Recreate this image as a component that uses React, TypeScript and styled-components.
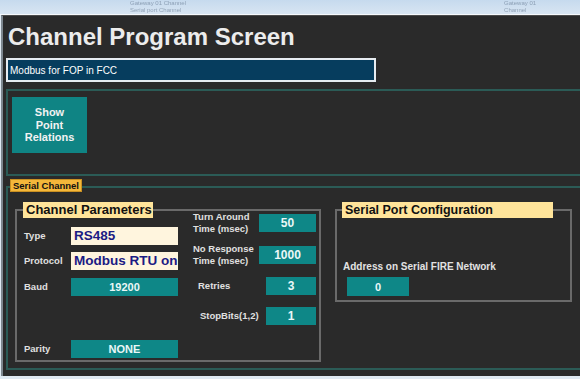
import React from "react";
import styled, { createGlobalStyle } from "styled-components";

const Global = createGlobalStyle`
  html, body { margin: 0; padding: 0; }
  body { background: #dde8f2; font-family: "Liberation Sans", Arial, sans-serif; }
  #root { width: 580px; height: 379px; overflow: hidden; }
`;

const Page = styled.div`
  width: 580px;
  height: 379px;
  display: flex;
  flex-direction: column;
  background: #dfe9f2;
  overflow: hidden;
`;

const Chrome = styled.div`
  height: 14px;
  flex: none;
  background: linear-gradient(#c6daee, #d8e5f2);
  border-bottom: 1px solid #f6f9fc;
  display: flex;
  padding-left: 130px;
  gap: 318px;
  overflow: hidden;
`;

const ChromeText = styled.div`
  font-size: 6px;
  line-height: 7px;
  color: rgba(80, 100, 125, 0.5);
  filter: blur(0.7px);
  white-space: nowrap;
`;

const Main = styled.main`
  height: 361px;
  box-sizing: border-box;
  margin-left: 1px;
  background: #2a2a2a;
  border-top: 1px solid #4c4c4c;
  border-left: 2px solid #7d878f;
  padding: 7px 0 0 0;
  display: flex;
  flex-direction: column;
`;

const Title = styled.h1`
  margin: 0 0 0 5px;
  font-size: 24px;
  line-height: 28px;
  font-weight: bold;
  color: #ececec;
`;

const NameInput = styled.input`
  margin: 7px 0 0 3px;
  width: 370px;
  height: 24px;
  box-sizing: border-box;
  border: 2px solid #e6ecf1;
  background: #063d5e;
  color: #ffffff;
  font-family: "Liberation Sans", Arial, sans-serif;
  font-size: 10px;
  padding: 0 2px;
  outline: none;
`;

const Section = styled.section<{ $mt: number; $h: number; $pad: string }>`
  position: relative;
  margin: ${(p) => p.$mt}px 0 0 3px;
  height: ${(p) => p.$h}px;
  box-sizing: border-box;
  border: 2px solid #2b5b56;
  border-right: none;
  padding: ${(p) => p.$pad};
`;

const SectionTag = styled.div`
  position: absolute;
  top: -9px;
  left: 2px;
  height: 13px;
  line-height: 12px;
  padding: 0 2px;
  background: #f4b73a;
  border: 1px solid #c99022;
  box-sizing: border-box;
  width: 72px;
  font-size: 9.5px;
  font-weight: bold;
  color: #111;
  white-space: nowrap;
`;

const ActionButton = styled.button`
  width: 75px;
  height: 56px;
  border: none;
  background: #0f8484;
  color: #f2f2f2;
  font-family: "Liberation Sans", Arial, sans-serif;
  font-size: 11px;
  font-weight: bold;
  line-height: 12.5px;
  text-align: center;
  padding: 0;
`;

const FrameRow = styled.div`
  display: flex;
  align-items: flex-start;
  gap: 14px;
`;

const Frame = styled.div<{ $w: number; $h: number }>`
  position: relative;
  width: ${(p) => p.$w}px;
  height: ${(p) => p.$h}px;
  box-sizing: border-box;
  border: 2px solid #6a6a6a;
  display: flex;
  align-items: flex-start;
`;

const FrameTitle = styled.div<{ $w: number; $left: number; $size: number }>`
  position: absolute;
  top: -9px;
  left: ${(p) => p.$left}px;
  width: ${(p) => p.$w}px;
  height: 16px;
  line-height: 16px;
  padding-left: 3px;
  box-sizing: border-box;
  background: #ffe49a;
  color: #111;
  font-size: ${(p) => p.$size}px;
  font-weight: bold;
  white-space: nowrap;
`;

const LeftCol = styled.div`
  display: flex;
  flex-direction: column;
  margin: 16px 0 0 7px;
`;

const RightCol = styled.div`
  display: flex;
  flex-direction: column;
  margin: 0 0 0 15px;
`;

const LRow = styled.div<{ $mt: number }>`
  display: grid;
  grid-template-columns: 47px 107px;
  align-items: center;
  margin-top: ${(p) => p.$mt}px;
`;

const RRow = styled.div<{ $mt: number }>`
  display: grid;
  grid-template-columns: 66px 57px;
  align-items: center;
  margin-top: ${(p) => p.$mt}px;
`;

const Label = styled.div<{ $indent?: number }>`
  font-size: 9.5px;
  line-height: 12px;
  font-weight: bold;
  color: #e0e0e0;
  padding-left: ${(p) => p.$indent ?? 0}px;
  white-space: nowrap;
`;

const AddrLabel = styled.div`
  font-size: 10px;
  line-height: 12px;
  font-weight: bold;
  color: #e2e2e2;
  white-space: nowrap;
`;

const TealField = styled.div<{ $w: number; $h?: number; $size: number }>`
  justify-self: end;
  width: ${(p) => p.$w}px;
  height: ${(p) => p.$h ?? 18}px;
  background: #0e8787;
  color: #eaf7f7;
  font-size: ${(p) => p.$size}px;
  font-weight: bold;
  display: flex;
  align-items: center;
  justify-content: center;
`;

const CreamField = styled.div`
  width: 107px;
  height: 18px;
  box-sizing: border-box;
  background: #fff5de;
  color: #1b1b84;
  font-size: 13.5px;
  font-weight: bold;
  line-height: 18px;
  padding-left: 3px;
  overflow: hidden;
  white-space: nowrap;
`;

const PortBody = styled.div`
  display: flex;
  flex-direction: column;
  padding: 50px 0 0 6px;
`;

const AddrField = styled(TealField)`
  justify-self: start;
  margin: 4px 0 0 4px;
`;

export default function App() {
  return (
    <Page>
      <Global />
      <Chrome>
        <ChromeText>
          Gateway 01 Channel
          <br />
          Serial port Channel
        </ChromeText>
        <ChromeText>
          Gateway 01
          <br />
          Channel
        </ChromeText>
      </Chrome>
      <Main>
        <Title>Channel Program Screen</Title>
        <NameInput readOnly defaultValue="Modbus for FOP in FCC" />
        <Section $mt={7} $h={87} $pad="6px 0 0 4px">
          <ActionButton>
            Show
            <br />
            Point
            <br />
            Relations
          </ActionButton>
        </Section>
        <Section $mt={10} $h={184} $pad="21px 0 0 7px">
          <SectionTag>Serial Channel</SectionTag>
          <FrameRow>
            <Frame $w={306} $h={153}>
              <FrameTitle $w={130} $left={6} $size={13}>
                Channel Parameters
              </FrameTitle>
              <LeftCol>
                <LRow $mt={0}>
                  <Label>Type</Label>
                  <CreamField>RS485</CreamField>
                </LRow>
                <LRow $mt={7}>
                  <Label>Protocol</Label>
                  <CreamField>Modbus RTU on</CreamField>
                </LRow>
                <LRow $mt={8}>
                  <Label>Baud</Label>
                  <TealField $w={107} $size={11}>
                    19200
                  </TealField>
                </LRow>
                <LRow $mt={44}>
                  <Label>Parity</Label>
                  <TealField $w={107} $size={11}>
                    NONE
                  </TealField>
                </LRow>
              </LeftCol>
              <RightCol>
                <RRow $mt={0}>
                  <Label>
                    Turn Around
                    <br />
                    Time (msec)
                  </Label>
                  <TealField $w={57} $size={12}>
                    50
                  </TealField>
                </RRow>
                <RRow $mt={8}>
                  <Label>
                    No Response
                    <br />
                    Time (msec)
                  </Label>
                  <TealField $w={57} $size={12}>
                    1000
                  </TealField>
                </RRow>
                <RRow $mt={10}>
                  <Label $indent={5}>Retries</Label>
                  <TealField $w={50} $size={12}>
                    3
                  </TealField>
                </RRow>
                <RRow $mt={12}>
                  <Label $indent={7}>StopBits(1,2)</Label>
                  <TealField $w={50} $size={12}>
                    1
                  </TealField>
                </RRow>
              </RightCol>
            </Frame>
            <Frame $w={237} $h={93}>
              <FrameTitle $w={211} $left={5} $size={12.5}>
                Serial Port Configuration
              </FrameTitle>
              <PortBody>
                <AddrLabel>Address on Serial FIRE Network</AddrLabel>
                <AddrField $w={62} $h={19} $size={11}>
                  0
                </AddrField>
              </PortBody>
            </Frame>
          </FrameRow>
        </Section>
      </Main>
    </Page>
  );
}
